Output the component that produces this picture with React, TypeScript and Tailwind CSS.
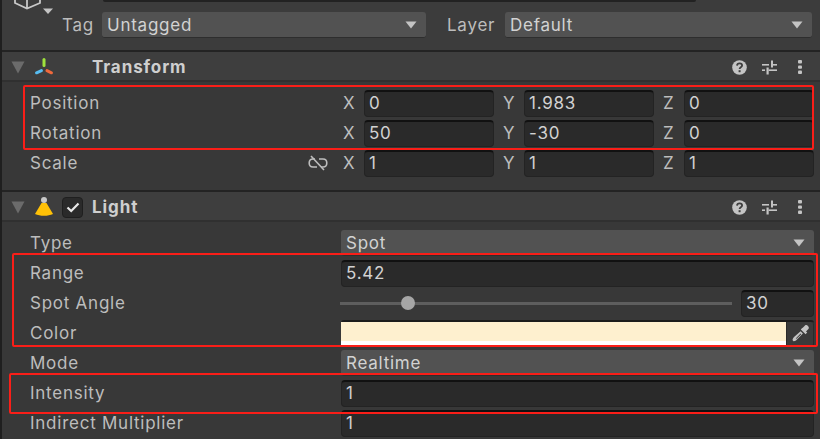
import React from 'react';

const uiFont = "font-['Inter','Noto_Sans',sans-serif]";

const Caret = ({ className = '' }: { className?: string }) => (
  <svg width="12" height="8" viewBox="0 0 12 8" className={className}>
    <path d="M0.5 0.5H11.5L6 7.5Z" fill="#c4c4c4" />
  </svg>
);

const Dropdown = ({ value, className = '' }: { value: string; className?: string }) => (
  <div className={`flex h-[26px] items-center justify-between rounded-[3px] border-b border-[#2e2e2e] bg-[#525252] pl-[5px] pr-[9px] text-[#d2d2d2] ${className}`}>
    <span className="pt-[2px]">{value}</span>
    <Caret />
  </div>
);

const Field = ({ value, className = '' }: { value: string; className?: string }) => (
  <div className={`flex h-[27px] items-center rounded-[4px] border border-[#232323] border-t-[2px] border-t-[#111111] bg-[#2a2a2a] pl-[4px] text-[#d2d2d2] ${className}`}>
    {value}
  </div>
);

const Row = ({ label, children }: { label: string; children: React.ReactNode }) => (
  <div className="flex h-[30px] items-center pl-[28px] pr-[6px]">
    <span className="w-[311px] shrink-0 text-[#bdbdbd]">{label}</span>
    <div className="flex min-w-0 flex-1 items-center">{children}</div>
  </div>
);

const Vector = ({ x, y, z }: { x: string; y: string; z: string }) => (
  <div className="flex items-center">
    {[['X', x], ['Y', y], ['Z', z]].map(([axis, v], i) => (
      <div key={axis} className={`flex items-center ${i > 0 ? 'ml-[7px]' : ''}`}>
        <span className="w-[23px] pl-[2px] text-[#bdbdbd]">{axis}</span>
        <Field value={v} className="w-[130px]" />
      </div>
    ))}
  </div>
);

const HelpIcon = () => (
  <svg width="15" height="15" viewBox="0 0 15 15">
    <circle cx="7.5" cy="7.5" r="7.3" fill="#c4c4c4" />
    <path d="M5 5.6C5.1 4.2 6.2 3.4 7.6 3.4C9.1 3.4 10.1 4.3 10.1 5.5C10.1 7.3 7.6 7.3 7.6 9" fill="none" stroke="#3e3e3e" strokeWidth="1.8" />
    <rect x="6.6" y="10.2" width="2" height="2" fill="#3e3e3e" />
  </svg>
);

const PresetIcon = () => (
  <svg width="15" height="15" viewBox="0 0 15 15" fill="#c4c4c4">
    <rect x="0" y="4" width="7" height="1.6" />
    <rect x="9" y="0.5" width="2" height="7" />
    <rect x="11" y="4" width="4" height="1.6" />
    <rect x="0" y="9.4" width="3" height="1.6" />
    <rect x="4.5" y="7.5" width="2.2" height="7" />
    <rect x="6.7" y="9.4" width="8.3" height="1.6" />
  </svg>
);

const DotsIcon = () => (
  <svg width="4" height="14" viewBox="0 0 4 14" fill="#c4c4c4">
    <rect x="0" y="0" width="4" height="3.4" rx="1" />
    <rect x="0" y="5.4" width="4" height="3.4" rx="1" />
    <rect x="0" y="10.6" width="4" height="3.4" rx="1" />
  </svg>
);

const TransformIcon = () => (
  <svg width="18" height="20" viewBox="0 0 18 20" fill="none" strokeWidth="3" strokeLinecap="round">
    <path d="M9 2.5V8.5" stroke="#9fe23c" />
    <path d="M1.6 15.8L6.4 13.6" stroke="#57bdf2" />
    <path d="M12 13.6L16.4 15.8" stroke="#f0693c" />
  </svg>
);

const LightIcon = () => (
  <svg width="18" height="22" viewBox="0 0 18 22">
    <circle cx="9" cy="4" r="3" fill="#c8c8c8" />
    <path d="M6.5 7H11.5L18 18C13 20.4 5 20.4 0 18Z" fill="#ffc107" />
  </svg>
);

const Header = ({ icon, title, check }: { icon: React.ReactNode; title: string; check?: boolean }) => (
  <div className="flex h-[30px] items-center border-b-2 border-[#303030] bg-[#3e3e3e] pl-[9px] pr-[18px] pt-[2px]">
    <svg width="14" height="13" viewBox="0 0 14 13" className="shrink-0">
      <path d="M0.5 0.5H13.5L7 12.5Z" fill="#6b6b6b" />
    </svg>
    <div className="ml-[10px] flex w-[20px] shrink-0 justify-start">{icon}</div>
    <div className="ml-[7px] w-[20px] shrink-0">
      {check && (
        <div className="flex h-[21px] w-[21px] items-center justify-center rounded-[4px] border border-[#1f1f1f] bg-[#2a2a2a]">
          <svg width="14" height="11" viewBox="0 0 14 11" fill="none">
            <path d="M1.5 5.5L5.2 9L12.5 1.5" stroke="#e8e8e8" strokeWidth="2.2" />
          </svg>
        </div>
      )}
    </div>
    <span className="ml-[10px] flex-1 font-bold tracking-[0.9px] text-[#cfcfcf]">{title}</span>
    <div className="flex items-center">
      <HelpIcon />
      <div className="ml-[15px]"><PresetIcon /></div>
      <div className="ml-[21px]"><DotsIcon /></div>
    </div>
  </div>
);

const RedBox = ({ className }: { className: string }) => (
  <div className={`absolute rounded-[2px] border-2 border-[#fa1e18] ${className}`} />
);

export default function App() {
  return (
    <div className={`relative h-[439px] w-[820px] overflow-hidden border-l-2 border-[#1f1f1f] bg-[#383838] text-[17px] leading-none tracking-[0.75px] ${uiFont}`}>
      {/* GameObject header, scrolled off the top */}
      <div className="relative h-[50px] bg-[#3c3c3c]">
        <div className="absolute left-[101px] top-0 h-[2px] w-[593px] rounded-b-[2px] bg-[#222222]" />
        <svg width="44" height="16" viewBox="0 0 44 16" className="absolute left-[10px] top-0">
          <path d="M3 -3V3L15 8.5L28 3V-3M15 8.5V0" fill="none" stroke="#c8c8c8" strokeWidth="1.8" />
          <path d="M31 8.5H41L36 14Z" fill="#c4c4c4" />
        </svg>
        <div className="flex items-center pl-[60px] pt-[12px]">
          <span className="w-[40px] text-[#bdbdbd]">Tag</span>
          <Dropdown value="Untagged" className="w-[324px]" />
          <span className="ml-[21px] w-[58px] text-[#bdbdbd]">Layer</span>
          <Dropdown value="Default" className="w-[307px]" />
        </div>
      </div>

      <div className="h-[2px] bg-[#232323]" />
      <Header icon={<TransformIcon />} title="Transform" />
      <div className="h-[108px] pt-[6px]">
        <Row label="Position"><Vector x="0" y="1.983" z="0" /></Row>
        <Row label="Rotation"><Vector x="50" y="-30" z="0" /></Row>
        <div className="relative">
          <Row label="Scale"><Vector x="1" y="1" z="1" /></Row>
          <svg width="20" height="16" viewBox="0 0 20 16" fill="none" stroke="#bdbdbd" strokeWidth="1.6" className="absolute left-[306px] top-[7px]">
            <path d="M7 4H5C2.5 4 1.2 5.8 1.2 8C1.2 10.2 2.5 12 5 12H9M11 4H15C17.5 4 18.8 5.8 18.8 8C18.8 10.2 17.5 12 15 12H13" />
            <path d="M3 1L16 15" />
          </svg>
        </div>
      </div>

      <div className="h-[2px] bg-[#232323]" />
      <Header icon={<LightIcon />} title="Light" check />
      <div className="pt-[6px]">
        <Row label="Type"><Dropdown value="Spot" className="w-full" /></Row>
        <Row label="Range"><Field value="5.42" className="w-full" /></Row>
        <Row label="Spot Angle">
          <div className="relative flex h-[14px] flex-1 items-center">
            <div className="h-[3px] w-[392px] -ml-[1px] bg-[#5e5e5e]" />
            <div className="absolute left-[60px] top-0 h-[14px] w-[14px] rounded-full bg-[#a6a6a6]" />
          </div>
          <Field value="30" className="w-[73px]" />
        </Row>
        <Row label="Color">
          <div className="flex h-[27px] w-full rounded-[3px] border-t-2 border-[#1c1c1c]">
            <div className="flex flex-1 flex-col">
              <div className="h-[19px] bg-[#fef0cf]" />
              <div className="h-[6px] bg-white" />
            </div>
            <div className="flex w-[28px] items-center justify-center rounded-r-[3px] border border-t-0 border-[#2a2a2a] bg-[#3a3a3a]">
              <svg width="17" height="17" viewBox="0 0 17 17" fill="#c4c4c4">
                <path d="M10.5 3L13 0.5C13.8 -0.2 15 -0.1 16 0.9C17 1.9 17.1 3.1 16.4 3.9L14 6.4L15.2 7.6L13.6 9.2L8.8 4.4L10.4 2.8Z" />
                <path d="M8.6 6.2L10.9 8.5L5 14.6C4 15.6 2.6 16.4 1.6 16.2L0.6 15.2C0.4 14.2 1.3 12.8 2.3 11.8ZM8.6 8.6L3.8 13.4L4.6 13.8L9.2 9.2Z" fillRule="evenodd" />
              </svg>
            </div>
          </div>
        </Row>
        <Row label="Mode"><Dropdown value="Realtime" className="w-full" /></Row>
        <Row label="Intensity"><Field value="1" className="w-full" /></Row>
        <Row label="Indirect Multiplier"><Field value="1" className="w-full" /></Row>
      </div>

      {/* annotation boxes drawn over the screenshot */}
      <RedBox className="left-[21px] top-[85px] h-[65px] w-[791px]" />
      <RedBox className="left-[10px] top-[253px] h-[94px] w-[806px]" />
      <RedBox className="left-[7px] top-[373px] h-[41px] w-[809px]" />
    </div>
  );
}
